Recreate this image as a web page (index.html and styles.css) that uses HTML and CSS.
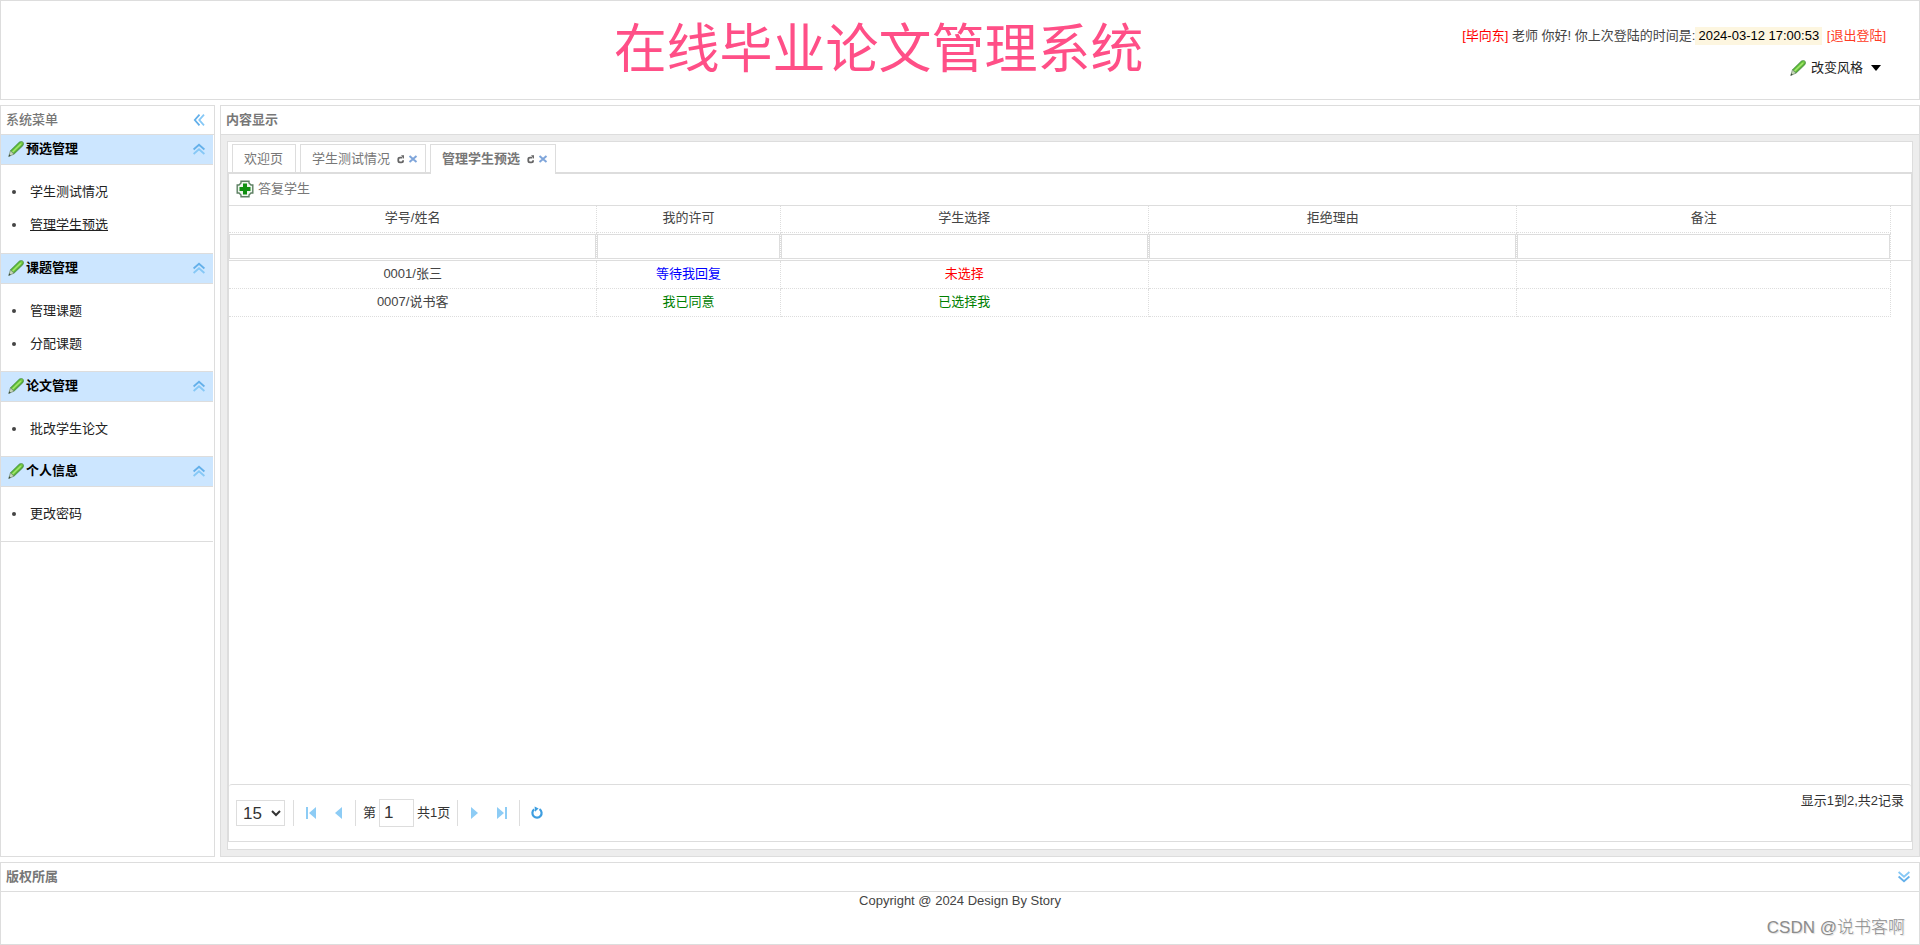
FILE: index.html
```html
<!DOCTYPE html>
<html lang="zh-CN">
<head>
<meta charset="utf-8">
<title>在线毕业论文管理系统</title>
<link rel="stylesheet" href="styles.css">
</head>
<body>
<svg class="defs" aria-hidden="true">
  <defs>
    <linearGradient id="green" x1="0" y1="0" x2="1" y2="1">
      <stop offset="0.3" stop-color="#2f9e22"/>
      <stop offset="0.5" stop-color="#7fd048"/>
      <stop offset="0.7" stop-color="#2f8a22"/>
    </linearGradient>
    <symbol id="pencil" viewBox="0 0 16 16">
      <path d="M11.4 1 Q14 -.4 15.2 1.4 Q16 3.2 14.8 4.8 L6 13.2 L2.4 9.8 Z" fill="url(#green)" stroke="#4a8a4a" stroke-width=".7"/>
      <path d="M2.4 9.8 L6 13.2 L.8 15.4 Z" fill="#c9d8bb" stroke="#5d7a5d" stroke-width=".6"/>
      <path d="M.5 15.7 L1.3 13.3 L2.8 14.7 Z" fill="#3b4a3b"/>
      <path d="M13 3 L4.6 11" stroke="#9fe66c" stroke-width="1.6"/>
    </symbol>
    <symbol id="up" viewBox="0 0 12 12">
      <path d="M.6 6.5 L6 1.8 L11.4 6.5" fill="none" stroke="#64b0ea" stroke-width="1.8"/>
      <path d="M.6 11 L6 6.3 L11.4 11" fill="none" stroke="#86c8f6" stroke-width="1.8"/>
    </symbol>
    <symbol id="refresh" viewBox="0 0 10 10">
      <path d="M6.4 3.6 H4 Q2.3 3.6 2.3 5.2 V6.8 Q2.3 8.4 4 8.4 H5.4 Q7.1 8.4 7.1 6.8 V6.2" fill="none" stroke="#666" stroke-width="1.8"/>
      <path d="M5 1.2 H8 V5 Z" fill="#666"/>
    </symbol>
    <symbol id="close" viewBox="0 0 10 10">
      <path d="M1.5 2 L8.5 8 M8.5 2 L1.5 8" stroke="#7fa5da" stroke-width="2"/>
    </symbol>
  </defs>
</svg>

<div class="layout">
  <header class="banner">
    <h1 class="banner-title">在线毕业论文管理系统</h1>
    <div class="account">
      <p class="greeting"><span class="user">[毕向东]</span> 老师 你好! 你上次登陆的时间是:<span class="stamp">2024-03-12 17:00:53</span> <a class="logout" href="#">[退出登陆]</a></p>
      <button class="theme" type="button">
        <svg class="icon16"><use href="#pencil"/></svg>
        <span>改变风格</span>
        <svg class="caret" viewBox="0 0 10 6"><path d="M0 0 H10 L5 6 Z" fill="#000"/></svg>
      </button>
    </div>
  </header>

  <div class="middle">
    <aside class="panel sidebar">
      <div class="panel-head">
        <h2 class="panel-title light">系统菜单</h2>
        <button class="tool" type="button" aria-label="折叠菜单"><svg class="icon12 turn-left"><use href="#up"/></svg></button>
      </div>
      <nav class="menu">
        <section>
          <h3 class="menu-head"><svg class="icon16"><use href="#pencil"/></svg><span>预选管理</span><svg class="icon12 fold"><use href="#up"/></svg></h3>
          <ul class="menu-list">
            <li><a href="#">学生测试情况</a></li>
            <li><a class="current" href="#">管理学生预选</a></li>
          </ul>
        </section>
        <section>
          <h3 class="menu-head"><svg class="icon16"><use href="#pencil"/></svg><span>课题管理</span><svg class="icon12 fold"><use href="#up"/></svg></h3>
          <ul class="menu-list">
            <li><a href="#">管理课题</a></li>
            <li><a href="#">分配课题</a></li>
          </ul>
        </section>
        <section>
          <h3 class="menu-head"><svg class="icon16"><use href="#pencil"/></svg><span>论文管理</span><svg class="icon12 fold"><use href="#up"/></svg></h3>
          <ul class="menu-list">
            <li><a href="#">批改学生论文</a></li>
          </ul>
        </section>
        <section>
          <h3 class="menu-head"><svg class="icon16"><use href="#pencil"/></svg><span>个人信息</span><svg class="icon12 fold"><use href="#up"/></svg></h3>
          <ul class="menu-list">
            <li><a href="#">更改密码</a></li>
          </ul>
        </section>
      </nav>
    </aside>

    <main class="panel content">
      <div class="panel-head">
        <h2 class="panel-title">内容显示</h2>
      </div>
      <div class="stage">
        <div class="tabs">
          <div class="tab-bar">
            <div class="tab"><button class="tab-name" type="button">欢迎页</button></div>
            <div class="tab closable">
              <button class="tab-name" type="button">学生测试情况</button>
              <button class="tool" type="button" aria-label="刷新"><svg class="icon10"><use href="#refresh"/></svg></button>
              <button class="tool" type="button" aria-label="关闭"><svg class="icon10"><use href="#close"/></svg></button>
            </div>
            <div class="tab closable active">
              <button class="tab-name" type="button">管理学生预选</button>
              <button class="tool" type="button" aria-label="刷新"><svg class="icon10"><use href="#refresh"/></svg></button>
              <button class="tool" type="button" aria-label="关闭"><svg class="icon10"><use href="#close"/></svg></button>
            </div>
          </div>
          <div class="grid">
            <div class="toolbar">
              <button class="action" type="button">
                <svg class="icon18" viewBox="0 0 18 18">
                  <path d="M5 1.2 H13 V3 L15 5 H16.8 V13 H15 L13 15 V16.8 H5 V15 L3 13 H1.2 V5 H3 L5 3 Z" fill="#eef6ee" stroke="#5d7f63" stroke-width="1.4"/>
                  <path d="M7 3.5 H11 V7 H14.5 V11 H11 V14.5 H7 V11 H3.5 V7 H7 Z" fill="#0f8f10"/>
                </svg>
                <span>答复学生</span>
              </button>
            </div>
            <div class="rows">
              <table class="records">
                <colgroup>
                  <col class="wide"><col class="narrow"><col class="wide"><col class="wide"><col><col class="gutter">
                </colgroup>
                <thead>
                  <tr><th>学号/姓名</th><th>我的许可</th><th>学生选择</th><th>拒绝理由</th><th>备注</th><td class="blank"></td></tr>
                  <tr class="filters">
                    <td><input type="text" aria-label="筛选学号/姓名"></td>
                    <td><input type="text" aria-label="筛选我的许可"></td>
                    <td><input type="text" aria-label="筛选学生选择"></td>
                    <td><input type="text" aria-label="筛选拒绝理由"></td>
                    <td><input type="text" aria-label="筛选备注"></td>
                    <td class="end"></td>
                  </tr>
                </thead>
                <tbody>
                  <tr><td>0001/张三</td><td class="waiting">等待我回复</td><td class="missing">未选择</td><td></td><td></td><td class="blank"></td></tr>
                  <tr><td>0007/说书客</td><td class="agreed">我已同意</td><td class="agreed">已选择我</td><td></td><td></td><td class="blank"></td></tr>
                </tbody>
              </table>
            </div>
            <div class="pager">
              <div class="pager-nav">
                <select class="page-size" aria-label="每页条数"><option>15</option></select>
                <span class="rule"></span>
                <button class="tool" type="button" aria-label="首页"><svg class="icon12" viewBox="0 0 12 12"><path d="M1 0 H3 V12 H1 Z M11 0 V12 L4 6 Z" fill="#8dccf5"/></svg></button>
                <button class="tool" type="button" aria-label="上一页"><svg class="icon12" viewBox="0 0 12 12"><path d="M10 0 V12 L3 6 Z" fill="#8dccf5"/></svg></button>
                <span class="rule"></span>
                <label class="page-no">第<input type="text" value="1">共1页</label>
                <span class="rule"></span>
                <button class="tool" type="button" aria-label="下一页"><svg class="icon12" viewBox="0 0 12 12"><path d="M2 0 V12 L9 6 Z" fill="#8dccf5"/></svg></button>
                <button class="tool" type="button" aria-label="末页"><svg class="icon12" viewBox="0 0 12 12"><path d="M9 0 H11 V12 H9 Z M1 0 V12 L8 6 Z" fill="#8dccf5"/></svg></button>
                <span class="rule"></span>
                <button class="tool" type="button" aria-label="刷新"><svg class="icon14" viewBox="0 0 14 14"><path d="M9.5 3.2 A4.6 4.6 0 1 1 4.2 3.4" fill="none" stroke="#3e9ee0" stroke-width="2.2"/><path d="M4.6 .4 L8.6 2.6 L5 5.8 Z" fill="#3e9ee0"/></svg></button>
              </div>
              <p class="summary">显示1到2,共2记录</p>
            </div>
          </div>
        </div>
      </div>
    </main>
  </div>

  <footer class="panel footer">
    <div class="panel-head">
      <h2 class="panel-title">版权所属</h2>
      <button class="tool" type="button" aria-label="折叠页脚"><svg class="icon12 turn-down"><use href="#up"/></svg></button>
    </div>
    <p class="copyright">Copyright @ 2024 Design By Story</p>
    <span class="watermark">CSDN @说书客啊</span>
  </footer>
</div>
</body>
</html>
```
FILE: styles.css
```css
* { box-sizing: border-box; }

body {
  margin: 0;
  background: #fff;
  color: #444;
  font: 13px/18px "Liberation Sans", "Noto Sans CJK SC", sans-serif;
}

h1, h2, h3, p, ul { margin: 0; padding: 0; font-size: 13px; font-weight: normal; }

button, input, select { font: inherit; color: inherit; border-radius: 0; }
button { padding: 0; border: 0; background: none; cursor: pointer; }
a { color: inherit; text-decoration: none; }
svg { display: block; flex: none; }

.defs { position: absolute; width: 0; height: 0; }
.icon10 { width: 10px; height: 10px; }
.icon12 { width: 12px; height: 12px; }
.icon14 { width: 14px; height: 14px; }
.icon16 { width: 16px; height: 16px; }
.icon18 { width: 18px; height: 18px; }
.turn-left { transform: rotate(-90deg); }
.turn-down { transform: rotate(180deg); }

.layout {
  display: flex;
  flex-direction: column;
  gap: 5px;
  min-height: 100vh;
}

/* Banner */
.banner {
  display: grid;
  grid-template-columns: 32.5% auto 1fr;
  padding-right: 33px;
  border: 1px solid #ddd;
}
.banner-title {
  grid-column: 2;
  color: #ff4f87;
  font-size: 53px;
  line-height: 98px;
}
.account {
  display: flex;
  flex-direction: column;
  align-items: flex-end;
  gap: 14px;
  padding-top: 26px;
}
.user { color: #f00; }
.stamp {
  display: inline-block;
  padding: 0 3px;
  background: #fdf6e0;
  color: #000;
}
.logout { margin-left: 1px; color: #ff3b24; }
.theme {
  display: flex;
  align-items: center;
  gap: 5px;
  margin-right: 5px;
  color: #222;
}
.caret { width: 10px; height: 6px; margin-left: 3px; }

/* Panels */
.panel { border: 1px solid #ddd; }
.panel-head {
  display: flex;
  align-items: center;
  justify-content: space-between;
  height: 29px;
  padding: 0 9px 0 5px;
  border-bottom: 1px solid #ddd;
}
.panel-title { color: #777; font-weight: bold; }
.panel-title.light { font-weight: 500; }
.middle { display: flex; flex: 1; gap: 5px; }

/* Sidebar */
.sidebar { width: 215px; }
.menu { margin-right: 1px; border-bottom: 1px solid #ddd; }
.menu-head {
  display: flex;
  align-items: center;
  gap: 2px;
  height: 31px;
  padding: 0 8px 1px 7px;
  border: solid #ddd;
  border-width: 1px 0;
  background: #cce6ff;
  color: #000;
  font-weight: bold;
}
section:first-child .menu-head { height: 30px; border-top: 0; }
.fold { margin-left: auto; }
.menu-list { padding: 10px 11px 11px; line-height: 33px; list-style: none; }
section:first-child .menu-list { padding-bottom: 12px; }
.menu-list li { display: flex; align-items: center; gap: 14px; }
.menu-list li::before {
  width: 4px;
  height: 4px;
  border-radius: 2px;
  background: #444;
  content: "";
}
.menu-list a { color: #222; }
.menu-list .current { text-decoration: underline; }

/* Tabs */
.content { display: flex; flex: 1; flex-direction: column; min-width: 0; }
.stage { display: flex; flex: 1; padding: 6px; background: #ededed; }
.tabs {
  display: flex;
  flex: 1;
  flex-direction: column;
  min-width: 0;
  padding-bottom: 7px;
  border: 1px solid #ddd;
  background: #fff;
}
.tab-bar {
  display: flex;
  gap: 4px;
  padding: 2px 4px 0;
  border-bottom: 1px solid #ddd;
}
.tab {
  display: flex;
  align-items: center;
  gap: 2px;
  height: 28px;
  padding: 0 12px 0 11px;
  border: 1px solid #ddd;
  border-bottom: 0;
  background: #fff;
  color: #777;
}
.tab.closable { padding: 0 7px 0 11px; }
.tab.closable .tab-name { margin-right: 4px; }
.tab.active { height: 30px; margin-bottom: -2px; padding-bottom: 2px; font-weight: bold; z-index: 1; }

/* Data grid */
.grid {
  display: flex;
  flex: 1;
  flex-direction: column;
  border: 1px solid #ddd;
}
.toolbar { height: 32px; padding: 6px 7px; border-bottom: 1px solid #ddd; }
.action { display: flex; align-items: center; gap: 4px; color: #777; }
.rows { flex: 1; }
.records { width: 100%; border-spacing: 0; table-layout: fixed; }
.wide { width: 21.9%; }
.narrow { width: 10.9%; }
.gutter { width: 20px; }
.records th, .records td {
  height: 28px;
  padding: 0 0 2px;
  border: dotted #ddd;
  border-width: 0 1px 1px 0;
  font-weight: normal;
  text-align: center;
}
.records th { height: 27px; }
.records .blank { height: auto; border: 0; }
.records .filters td { padding: 1px 0; border-bottom-style: solid; }
.records .filters .end { border-right: 0; }
.filters input {
  display: block;
  width: 100%;
  height: 25px;
  border: 1px solid #ddd;
}
.records .waiting { color: #00f; }
.records .missing { color: #f00; }
.records .agreed { color: #008000; }

/* Pager */
.pager {
  display: flex;
  justify-content: space-between;
  height: 57px;
  padding: 0 7px;
  border-top: 1px solid #ddd;
  border-radius: 3px;
  color: #333;
}
.pager-nav { display: flex; align-items: center; gap: 7px; }
.page-size {
  width: 49px;
  height: 26px;
  margin-right: 1px;
  padding: 0 2px;
  border: 1px solid #ddd;
  background: #fff;
  font-size: 17px;
}
.rule { width: 1px; height: 26px; background: #ddd; }
.pager-nav .tool { display: grid; place-items: center; width: 20px; height: 20px; }
.page-no { display: flex; align-items: center; gap: 3px; }
.page-no input {
  width: 35px;
  height: 28px;
  padding: 0 4px;
  border: 1px solid #ddd;
  font-size: 17px;
}
.summary { padding-top: 7px; }

/* Footer */
.footer { position: relative; min-height: 83px; }
.copyright { text-align: center; }
.watermark {
  position: absolute;
  right: 14px;
  bottom: 4px;
  color: #8c8c8c;
  font-size: 17px;
  font-weight: 300;
  line-height: 24px;
  text-shadow: 1px 1px 1px #ddd;
}
```
